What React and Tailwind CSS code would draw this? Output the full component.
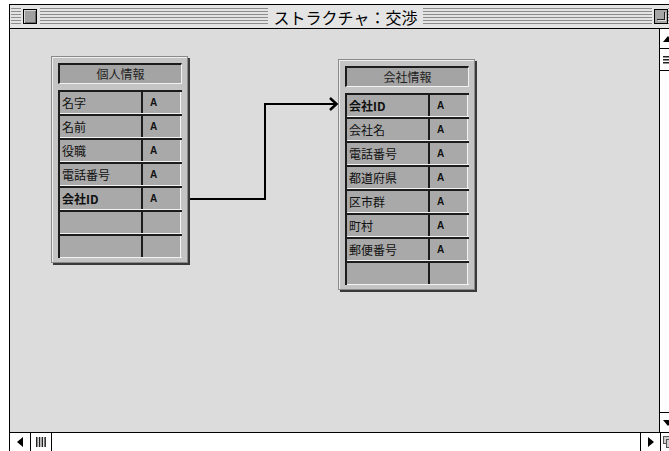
const jp = "font-['Noto_Sans_CJK_JP','Noto_Sans',sans-serif]";

const stripes =
  "bg-[image:repeating-linear-gradient(to_bottom,#8c8c8c_0px,#8c8c8c_1px,#e4e4e4_1px,#e4e4e4_3px)]";

const people = [
  { name: "名字", type: true },
  { name: "名前", type: true },
  { name: "役職", type: true },
  { name: "電話番号", type: true },
  { name: "会社ID", type: true, bold: true },
  { name: "" },
  { name: "" },
];

const company = [
  { name: "会社ID", type: true, bold: true },
  { name: "会社名", type: true },
  { name: "電話番号", type: true },
  { name: "都道府県", type: true },
  { name: "区市群", type: true },
  { name: "町村", type: true },
  { name: "郵便番号", type: true },
  { name: "" },
];

function Row({ name, type, bold }) {
  return (
    <div className="flex h-[24px] border-t-2 border-t-[#1c1c1c] border-b border-b-[#f2f2f2]">
      <div
        className={`w-[81px] flex items-center pl-[2px] bg-[#a9a9a9] text-[12px] leading-none text-[#111] ${jp} ${
          bold ? "font-bold" : ""
        }`}
      >
        {name}
      </div>
      <div className="w-[40px] flex items-center pl-[7px] bg-[#a9a9a9] border-l-2 border-l-[#1c1c1c] border-r border-r-[#f2f2f2]">
        {type && (
          <span className="font-['Liberation_Sans',sans-serif] font-black text-[10px] leading-none text-[#111]">
            A
          </span>
        )}
      </div>
    </div>
  );
}

function Table({ title, rows, className }) {
  return (
    <div
      className={`absolute bg-[#c4c4c4] border border-[#8a8a8a] shadow-[inset_1px_1px_0_#eeeeee,2px_2px_0_#3a3a3a] pt-[6px] pl-[6px] pr-[5px] pb-[4px] ${className}`}
    >
      <div
        className={`w-[124px] h-[21px] flex items-center justify-center bg-[#a4a4a4] border-t-2 border-l-2 border-t-[#1c1c1c] border-l-[#1c1c1c] border-r border-b border-r-[#f2f2f2] border-b-[#f2f2f2] text-[12px] leading-none text-[#222] ${jp}`}
      >
        {title}
      </div>
      <div className="mt-[6px] w-[124px] border-l-2 border-l-[#1c1c1c]">
        {rows.map((r, i) => (
          <Row key={i} {...r} />
        ))}
      </div>
    </div>
  );
}

export default function App() {
  return (
    <div className="w-[669px] h-[451px] overflow-hidden bg-white pt-[4px] pl-[9px]">
      <div className="w-[668px] h-[447px] border-l border-t border-black flex flex-col">
        {/* title bar */}
        <div className="h-[24px] shrink-0 border-b border-black bg-[#e4e4e4] flex items-center pl-[1px]">
          <div className={`w-[10px] h-[17px] ${stripes}`} />
          <div className="ml-[2px] w-[14px] h-[15px] border border-black bg-[#a0a0a0] shadow-[inset_1px_1px_0_#d6d6d6,inset_-1px_-1px_0_#6a6a6a]" />
          <div className={`ml-[3px] w-[228px] h-[17px] ${stripes}`} />
          <div className={`w-[155px] flex items-center justify-center text-[16px] leading-none text-black ${jp}`}>
            ストラクチャ：交渉
          </div>
          <div className={`w-[229px] h-[17px] ${stripes}`} />
          <div className="ml-[2px] w-[14px] h-[15px] border border-black bg-[#a6a6a6] flex">
            <div className="w-[8px] h-[8px] mt-[2px] ml-[2px] border-r border-b border-[#222] shadow-[1px_1px_0_#dcdcdc]" />
          </div>
          <div className={`flex-1 h-[17px] ${stripes}`} />
        </div>

        {/* content */}
        <div className="h-[403px] flex">
          <div className="w-[649px] h-full relative bg-[#dcdcdc] overflow-hidden">
            <Table title="個人情報" rows={people} className="left-[41px] top-[27px]" />
            <Table title="会社情報" rows={company} className="left-[328px] top-[30px]" />
            <svg className="absolute left-0 top-0" width="649" height="403">
              <polyline
                points="180,170 255,170 255,75 326,75"
                fill="none"
                stroke="#000"
                strokeWidth="2"
              />
              <polyline
                points="320,69 326.5,75 320,81"
                fill="none"
                stroke="#000"
                strokeWidth="2.5"
              />
            </svg>
          </div>
          <div className="w-[17px] border-l border-black bg-white flex flex-col">
            <div className="h-[20px] border-b border-black flex items-center justify-center">
              <svg width="10" height="6">
                <polygon points="0,6 5,0 10,6" fill="#000" />
              </svg>
            </div>
            <div className="h-[22px] border-b border-black flex items-center pl-[3px]">
              <svg width="12" height="8">
                <rect x="0" y="0" width="12" height="1.5" fill="#222" />
                <rect x="0" y="3" width="12" height="1.5" fill="#222" />
                <rect x="0" y="6" width="12" height="1.5" fill="#222" />
              </svg>
            </div>
            <div className="flex-1" />
            <div className="h-[20px] border-t border-black flex items-center justify-center">
              <svg width="10" height="6">
                <polygon points="0,0 10,0 5,6" fill="#000" />
              </svg>
            </div>
          </div>
        </div>

        {/* bottom scrollbar */}
        <div className="h-[19px] shrink-0 border-t border-black bg-white flex">
          <div className="w-[21px] border-r border-black flex items-center justify-center">
            <svg width="6" height="10">
              <polygon points="6,0 0,5 6,10" fill="#000" />
            </svg>
          </div>
          <div className="w-[21px] border-r border-black flex items-center justify-center">
            <svg width="10" height="10">
              <rect x="0" y="0" width="1.5" height="10" fill="#222" />
              <rect x="2.8" y="0" width="1.5" height="10" fill="#222" />
              <rect x="5.6" y="0" width="1.5" height="10" fill="#222" />
              <rect x="8.4" y="0" width="1.5" height="10" fill="#222" />
            </svg>
          </div>
          <div className="flex-1" />
          <div className="w-[20px] border-l border-black flex items-center justify-center">
            <svg width="6" height="10">
              <polygon points="0,0 6,5 0,10" fill="#000" />
            </svg>
          </div>
          <div className="w-[17px] border-l border-black flex items-center pl-[2px]">
            <svg width="12" height="12">
              <rect x="0.5" y="0.5" width="7" height="7" fill="#cfcfcf" stroke="#555" />
              <rect x="3.5" y="3.5" width="8" height="8" fill="#cfcfcf" stroke="#555" />
            </svg>
          </div>
        </div>
      </div>
    </div>
  );
}
